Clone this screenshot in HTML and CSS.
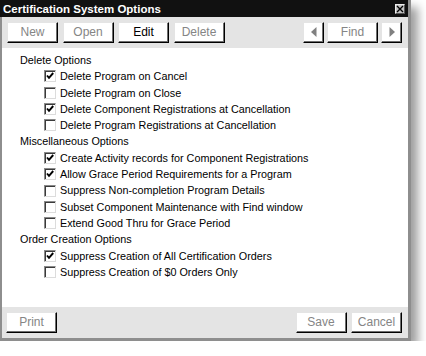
FILE: index.html
```html
<!DOCTYPE html>
<html>
<head>
<meta charset="utf-8">
<link rel="stylesheet" href="styles.css">
</head>
<body>
<div class="window">
  <div class="titlebar">
    <span class="title">Certification System Options</span>
    <span class="close"><svg width="8" height="8" viewBox="0 0 8 8"><path d="M1 1 L7 7 M7 1 L1 7" stroke="#000" stroke-width="1.4" fill="none"/></svg></span>
  </div>
  <div class="frame">
    <div class="toolbar">
      <div class="btn-group">
        <span class="btn disabled">New</span>
        <span class="btn disabled">Open</span>
        <span class="btn">Edit</span>
        <span class="btn disabled">Delete</span>
      </div>
      <div class="btn-group nav">
        <span class="btn arrow"><svg width="6" height="10" viewBox="0 0 6 10"><path d="M5.5 0 L0 5 L5.5 10 Z" fill="#808080"/></svg></span>
        <span class="btn disabled">Find</span>
        <span class="btn arrow"><svg width="6" height="10" viewBox="0 0 6 10"><path d="M0.5 0 L6 5 L0.5 10 Z" fill="#808080"/></svg></span>
      </div>
    </div>
    <div class="content">
      <div class="heading">Delete Options</div>
      <div class="item"><span class="cb checked"></span>Delete Program on Cancel</div>
      <div class="item"><span class="cb"></span>Delete Program on Close</div>
      <div class="item"><span class="cb checked"></span>Delete Component Registrations at Cancellation</div>
      <div class="item"><span class="cb"></span>Delete Program Registrations at Cancellation</div>
      <div class="heading">Miscellaneous Options</div>
      <div class="item"><span class="cb checked"></span>Create Activity records for Component Registrations</div>
      <div class="item"><span class="cb checked"></span>Allow Grace Period Requirements for a Program</div>
      <div class="item"><span class="cb"></span>Suppress Non-completion Program Details</div>
      <div class="item"><span class="cb"></span>Subset Component Maintenance with Find window</div>
      <div class="item"><span class="cb"></span>Extend Good Thru for Grace Period</div>
      <div class="heading">Order Creation Options</div>
      <div class="item"><span class="cb checked"></span>Suppress Creation of All Certification Orders</div>
      <div class="item"><span class="cb"></span>Suppress Creation of $0 Orders Only</div>
    </div>
    <div class="footer">
      <span class="btn disabled">Print</span>
      <div class="btn-group">
        <span class="btn disabled">Save</span>
        <span class="btn disabled">Cancel</span>
      </div>
    </div>
  </div>
</div>
</body>
</html>
```
FILE: styles.css
```css
html, body {
  margin: 0;
  padding: 0;
  background: #fff;
}
body {
  font-family: "Liberation Sans", Arial, sans-serif;
  font-size: 10.8px;
  color: #000;
}
.window {
  width: 408px;
  border-right: 3px solid #8e8e8e;
  border-bottom: 3px solid #8e8e8e;
  box-shadow: 7px 7px 9px rgba(0, 0, 0, 0.38);
}
.titlebar {
  height: 17px;
  background: #111;
  color: #fff;
  display: flex;
  align-items: center;
  justify-content: space-between;
  padding: 0 3px 0 3px;
}
.title {
  font-weight: bold;
  font-size: 11.5px;
}
.close {
  width: 10px;
  height: 10px;
  box-sizing: border-box;
  background: #c4c4c4;
  border: 1px solid;
  border-color: #eee #555 #555 #eee;
  display: flex;
  align-items: center;
  justify-content: center;
}
.frame {
  border-left: 2px solid #8e8e8e;
}
.toolbar, .footer {
  height: 31px;
  box-sizing: border-box;
  display: flex;
  align-items: center;
  justify-content: space-between;
  background: #e4e4e4;
}
.toolbar {
  padding: 0 6px 0 5px;
}
.footer {
  padding: 0 6px 0 4px;
}
.btn-group {
  display: flex;
  gap: 4.5px;
}
.btn-group.nav {
  gap: 3px;
}
.btn {
  width: 51px;
  height: 21px;
  box-sizing: border-box;
  background: #fff;
  border: 1px solid;
  border-color: #e4e4e4 #000 #000 #e4e4e4;
  box-shadow: inset -1px -1px 0 #6e6e6e;
  display: flex;
  align-items: center;
  justify-content: center;
  font-size: 12px;
  color: #000;
  padding-bottom: 1px;
}
.btn.disabled {
  color: #858585;
}
.btn.arrow {
  width: 21px;
}
.content {
  height: 259px;
  box-sizing: border-box;
  background: #fff;
  padding: 4px 0 0 18px;
}
.heading, .item {
  height: 16.3px;
  line-height: 16.3px;
  white-space: nowrap;
}
.item {
  display: flex;
  align-items: center;
  padding-left: 24px;
}
.cb {
  width: 12px;
  height: 12px;
  box-sizing: border-box;
  border: 1px solid;
  border-color: #8a8a8a #dcdcdc #dcdcdc #8a8a8a;
  box-shadow: inset 1px 1px 0 #3a3a3a;
  background: #fff;
  margin-right: 4px;
  flex: none;
}
.cb.checked {
  background: #fff url("data:image/svg+xml,%3Csvg xmlns='http://www.w3.org/2000/svg' width='10' height='10' viewBox='0 0 10 10'%3E%3Cpath d='M2 4.5 L4 6.8 L8.2 2' stroke='%23000' stroke-width='1.9' fill='none'/%3E%3C/svg%3E") 0 0 / 10px 10px no-repeat;
}
```
